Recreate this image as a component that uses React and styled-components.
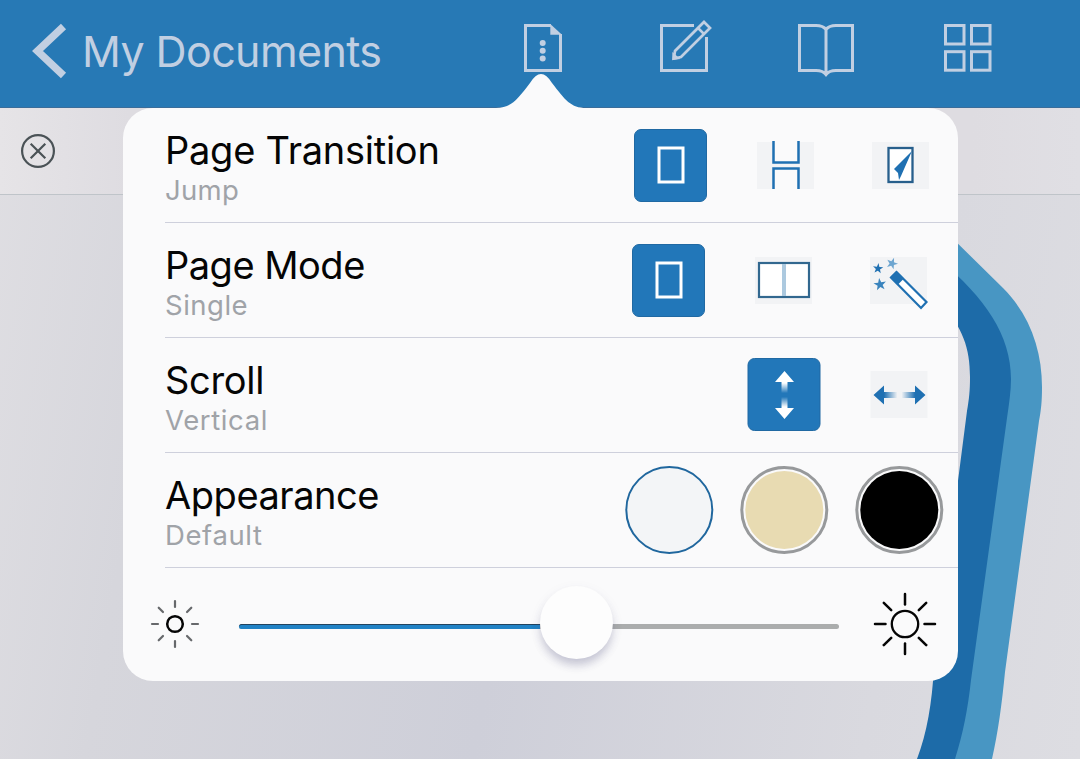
import React from 'react';
import styled, { createGlobalStyle } from 'styled-components';

const GlobalStyle = createGlobalStyle`
  * { box-sizing: border-box; }
  body { margin: 0; overflow: hidden; font-family: Inter, "Liberation Sans", sans-serif; }
  svg { display: block; flex: none; }
`;

const Screen = styled.main`
  position: relative;
  width: 1080px;
  height: 759px;
  overflow: hidden;
  display: flex;
  flex-direction: column;
  background: linear-gradient(100deg, #e0dfe3 0%, #d6d6dc 18%, #cecfd9 50%, #d9d9df 82%, #dddde2 100%);
`;

const NavBar = styled.header`
  height: 108px;
  display: flex;
  justify-content: space-between;
  padding: 18px 82px 0 30px;
  background: #2779b5;
  border-bottom: 1px solid #3a6d9a;
  color: #c1cfe2;
`;

const BackLink = styled.div`
  display: flex;
  align-items: center;
  height: 66px;
  gap: 14px;
`;

const NavTitle = styled.span`
  font-size: 43px;
  line-height: 60px;
  padding-bottom: 1px;
  letter-spacing: -0.6px;
  white-space: nowrap;
`;

const NavActions = styled.nav`
  display: flex;
  gap: 82px;
`;

const SubBar = styled.div`
  height: 87px;
  padding: 25px 20px;
  background: linear-gradient(90deg, #e6e4e7, #dedce1 12%, #dedce1 90%, #e0dfe4);
  border-bottom: 1px solid #bfc4c9;
`;

const Artwork = styled.svg`
  position: absolute;
  left: 900px;
  top: 220px;
`;

const Popover = styled.section`
  position: absolute;
  left: 123px;
  top: 108px;
  width: 835px;
  height: 573px;
  border-radius: 30px;
  background: #fafafb;
`;

const Pointer = styled.svg`
  position: absolute;
  left: 373px;
  top: -35px;
`;

const Row = styled.div`
  height: 115px;
  margin-left: 42px;
  padding-right: 1px;
  display: flex;
  justify-content: space-between;
  border-bottom: 1.5px solid #ced0dc;
`;

const Labels = styled.div`
  padding-top: 19px;
`;

const Title = styled.div`
  font-size: 38px;
  line-height: 46px;
  letter-spacing: ${(p) => p.$tracking};
  color: #050505;
  white-space: nowrap;
`;

const Value = styled.div`
  font-size: 27.5px;
  line-height: 34px;
  letter-spacing: ${(p) => p.$tracking};
  color: #a0a3a8;
`;

const Options = styled.div`
  display: flex;
  transform: translateX(${(p) => p.$shift || 0}px);
`;

const Cell = styled.div`
  width: 115px;
  height: ${(p) => p.$height || 114}px;
  display: flex;
  align-items: center;
  justify-content: center;
`;

const Tile = styled.div`
  width: 73px;
  height: 73px;
  border-radius: 7px;
  display: flex;
  align-items: center;
  justify-content: center;
  background: #2277b9;
  border: 1px solid #2069a3;
`;

const Plain = styled.div`
  width: 57px;
  height: 47px;
  display: flex;
  align-items: center;
  justify-content: center;
  background: #f2f3f5;
  svg { margin: -20px; }
`;

const Swatch = styled.div`
  width: 88px;
  height: 88px;
  border-radius: 50%;
  border: ${(p) => p.$width}px solid ${(p) => p.$ring};
  background: ${(p) => p.$color};
  background-clip: content-box;
  padding: ${(p) => p.$inset}px;
`;

const Brightness = styled.div`
  height: 111px;
  display: flex;
  align-items: center;
  padding: 0 21px 0 26px;
  justify-content: space-between;
`;

const Track = styled.div`
  width: 600px;
  height: 5px;
  margin: 5px -3px 0 0;
  border-radius: 3px;
  display: flex;
  align-items: center;
  background: #abadad;
`;

const Filled = styled.div`
  width: 301px;
  height: 5px;
  border-radius: 3px 0 0 3px;
  background: #2082c5;
  border-top: 1px solid #22435e;
`;

const Knob = styled.div`
  flex: none;
  width: 73px;
  height: 73px;
  margin-top: -7px;
  border-radius: 50%;
  background: #fdfdfd;
  box-shadow: 0 7px 8px -1px rgba(70, 70, 115, 0.26), 0 4px 14px rgba(70, 70, 115, 0.06);
`;

const Icon = ({ children }) => (
  <svg width="72" height="72" viewBox="-36 -36 72 72" fill="none">{children}</svg>
);

const NavIcon = ({ children }) => (
  <svg width="60" height="60" viewBox="0 0 60 60" fill="none" stroke="currentColor" strokeWidth="3">{children}</svg>
);

const BLUE = '#1f70b2';

const SinglePage = () => (
  <Icon><rect x="-12" y="-17" width="24" height="34" stroke="#fff" strokeWidth="3" /></Icon>
);

const Star = ({ x, y, s = 1, r = 0, fill }) => (
  <path
    transform={`translate(${x} ${y}) rotate(${r}) scale(${s})`}
    d="M0-6 1.4-1.9 5.7-1.9 2.3.8 3.5 4.9 0 2.4-3.5 4.9-2.3.8-5.7-1.9-1.4-1.9Z"
    fill={fill}
  />
);

const Sun = ({ size, r, from, to, width, rays, rayWidth }) => (
  <svg width={size} height={size} viewBox={`${-size / 2} ${-size / 2} ${size} ${size}`} fill="none">
    <circle r={r} stroke="#050505" strokeWidth={width} />
    {[0, 45, 90, 135, 180, 225, 270, 315].map((a) => (
      <path key={a} d={`M0 ${-from}V${-to}`} transform={`rotate(${a})`} stroke={rays} strokeWidth={rayWidth} strokeLinecap="round" />
    ))}
  </svg>
);

function Setting({ title, value, tracking, valueTracking, shift, children }) {
  return (
    <Row>
      <Labels>
        <Title $tracking={tracking}>{title}</Title>
        <Value $tracking={valueTracking}>{value}</Value>
      </Labels>
      <Options $shift={shift}>{children}</Options>
    </Row>
  );
}

export default function App() {
  return (
    <Screen>
      <GlobalStyle />
      <NavBar>
        <BackLink>
          <svg width="38" height="56" viewBox="0 0 38 56" fill="none">
            <path d="M33.5 3.5 7.500 28 33.5 52.5" stroke="currentColor" strokeWidth="7.500" />
          </svg>
          <NavTitle>My Documents</NavTitle>
        </BackLink>
        <NavActions>
          <NavIcon>
            <path d="M39 7.5H13.5v45h35V16" />
            <path d="M38.3 6 50 16.7H38.3Z" fill="currentColor" stroke="none" />
            <g fill="currentColor" stroke="none">
              <circle cx="30.7" cy="25" r="3" /><circle cx="30.7" cy="32.8" r="3" /><circle cx="30.7" cy="40.6" r="3" />
            </g>
          </NavIcon>
          <NavIcon>
            <path d="M40 7.5H7.5v45h45V19" />
            <path d="M19.800 40.500 21 33 50 4 56 10 27 39Z" strokeWidth="2.700" />
            <path d="M44 10 50 16" strokeWidth="2.500" />
            <path d="M18.300 42v-8l8 7Z" fill="currentColor" stroke="none" />
          </NavIcon>
          <NavIcon>
            <path d="M30 11.5Q27 7.5 20 7.5H3.5v45H20q7 0 10 4 3-4 10-4h16.5v-45H40q-7 0-10 4v45" />
          </NavIcon>
          <NavIcon>
            <rect x="7.5" y="7.5" width="18.500" height="18.500" /><rect x="33.500" y="7.500" width="18.500" height="18.500" />
            <rect x="7.500" y="33.700" width="18.500" height="18.500" /><rect x="33.500" y="33.700" width="18.500" height="18.500" />
          </NavIcon>
        </NavActions>
      </NavBar>
      <SubBar>
        <svg width="36" height="36" viewBox="0 0 36 36" fill="none" stroke="#4a5256" strokeWidth="2.200">
          <circle cx="18" cy="18" r="15.900" />
          <path d="m10.700 10.700 14.600 14.600m0-14.600L10.700 25.300" />
        </svg>
      </SubBar>
      <Artwork width="180" height="539" viewBox="900 220 180 539">
        <path d="M940 226 1003 288C1030 315 1042 350 1042 387 1042 402 1041 410 1039 421L1005 672C1002 703 998 733 992 759H950L1000 400 940 260Z" fill="#4896c3" />
        <path d="M940 260C985 298 1011 335 1011 379 1011 391 1009 404 1007 418L971 680C968 708 963 734 955 759H917C927 733 932 703 934 667L967 411C969 399 970 391 970 377 970 348 963 328 940 302Z" fill="#1d6ba8" />
      </Artwork>
      <Popover>
        <Pointer width="90" height="38" viewBox="0 0 90 38">
          <path d="M0 35C15 35 21 27 34 10Q45-8 56 10C69 27 75 35 90 35V38H0Z" fill="#fafafb" />
        </Pointer>
        <Setting title="Page Transition" value="Jump" tracking="-0.25px" valueTracking="0.3px" shift={1}>
          <Cell><Tile><SinglePage /></Tile></Cell>
          <Cell>
            <Plain><Icon>
              <path d="M-13-24h26v22h-26ZM-13 2h26v22h-26Z" fill="#fafafb" />
              <path d="M-12.500-24V-2.500H12.500V-24M-12.500 24V3.500H12.500V24" stroke={BLUE} strokeWidth="2.500" />
            </Icon></Plain>
          </Cell>
          <Cell>
            <Plain><Icon>
              <rect x="-12.500" y="-17" width="24" height="34" fill="#fff" stroke="#275f8c" strokeWidth="2.300" />
              <path d="M11-14-7 4-3 8-2 15 0 11Z" fill={BLUE} />
            </Icon></Plain>
          </Cell>
        </Setting>
        <Setting title="Page Mode" value="Single" tracking="-0.5px" valueTracking="0.5px" shift={-1}>
          <Cell><Tile><SinglePage /></Tile></Cell>
          <Cell>
            <Plain><Icon>
              <rect x="-25" y="-17" width="50" height="34" fill="#fff" stroke="#32688f" strokeWidth="2.200" />
              <path d="M0-16V16" stroke="#acc9df" strokeWidth="4" />
            </Icon></Plain>
          </Cell>
          <Cell>
            <Plain><Icon>
              <path d="M-2.500-8-8-2.500 22 28 27.500 22Z" fill="#fff" stroke={BLUE} strokeWidth="2.200" />
              <path d="m-2.500-9-6.500 6.500L-1.500 5 5-1.500Z" fill={BLUE} />
              <Star x={-21} y={-11.5} s={0.9} r={5} fill={BLUE} />
              <Star x={-7} y={-16.5} s={1} r={20} fill="#6da5d0" />
              <Star x={-19} y={4.5} s={1.1} r={-8} fill="#3983bd" />
            </Icon></Plain>
          </Cell>
        </Setting>
        <Setting title="Scroll" value="Vertical" tracking="-0.3px" valueTracking="0.6px" shift={-0.5}>
          <Cell $height={113}>
            <Tile><Icon>
              <defs><linearGradient id="up" x1="0" y1="-24" x2="0" y2="24" gradientUnits="userSpaceOnUse"><stop offset=".25" stopColor="#fff" /><stop offset=".46" stopColor="#2277b9" /><stop offset=".54" stopColor="#2277b9" /><stop offset=".75" stopColor="#fff" /></linearGradient></defs>
              <path d="M0-24 9.500-13H3V13H9.500L0 24-9.500 13H-3V-13H-9.500Z" fill="url(#up)" />
            </Icon></Tile>
          </Cell>
          <Cell $height={113}>
            <Plain><Icon>
              <defs><linearGradient id="across" x1="-26" y1="0" x2="26" y2="0" gradientUnits="userSpaceOnUse"><stop offset=".2" stopColor={BLUE} /><stop offset=".46" stopColor="#f2f3f5" /><stop offset=".54" stopColor="#f2f3f5" /><stop offset=".8" stopColor={BLUE} /></linearGradient></defs>
              <path d="M-26 0-15.500-9.500V-3H15.500V-9.500L26 0 15.500 9.500V3H-15.500V9.500Z" fill="url(#across)" />
            </Icon></Plain>
          </Cell>
        </Setting>
        <Setting title="Appearance" value="Default" tracking="-0.45px" valueTracking="0.6px" shift={-0.7}>
          <Cell $height={113}><Swatch $width={2} $ring="#20679e" $color="#f3f5f7" $inset={0} /></Cell>
          <Cell $height={113}><Swatch $width={3} $ring="#97999b" $color="#e8dbb2" $inset={2} /></Cell>
          <Cell $height={113}><Swatch $width={3} $ring="#97999b" $color="#000" $inset={2} /></Cell>
        </Setting>
        <Brightness>
          <Sun size={52} r={7.8} from={17} to={23} width={2.5} rays="#66686b" rayWidth={2.2} />
          <Track><Filled /><Knob /></Track>
          <Sun size={64} r={13.2} from={19.5} to={30} width={2.3} rays="#050505" rayWidth={2.5} />
        </Brightness>
      </Popover>
    </Screen>
  );
}
